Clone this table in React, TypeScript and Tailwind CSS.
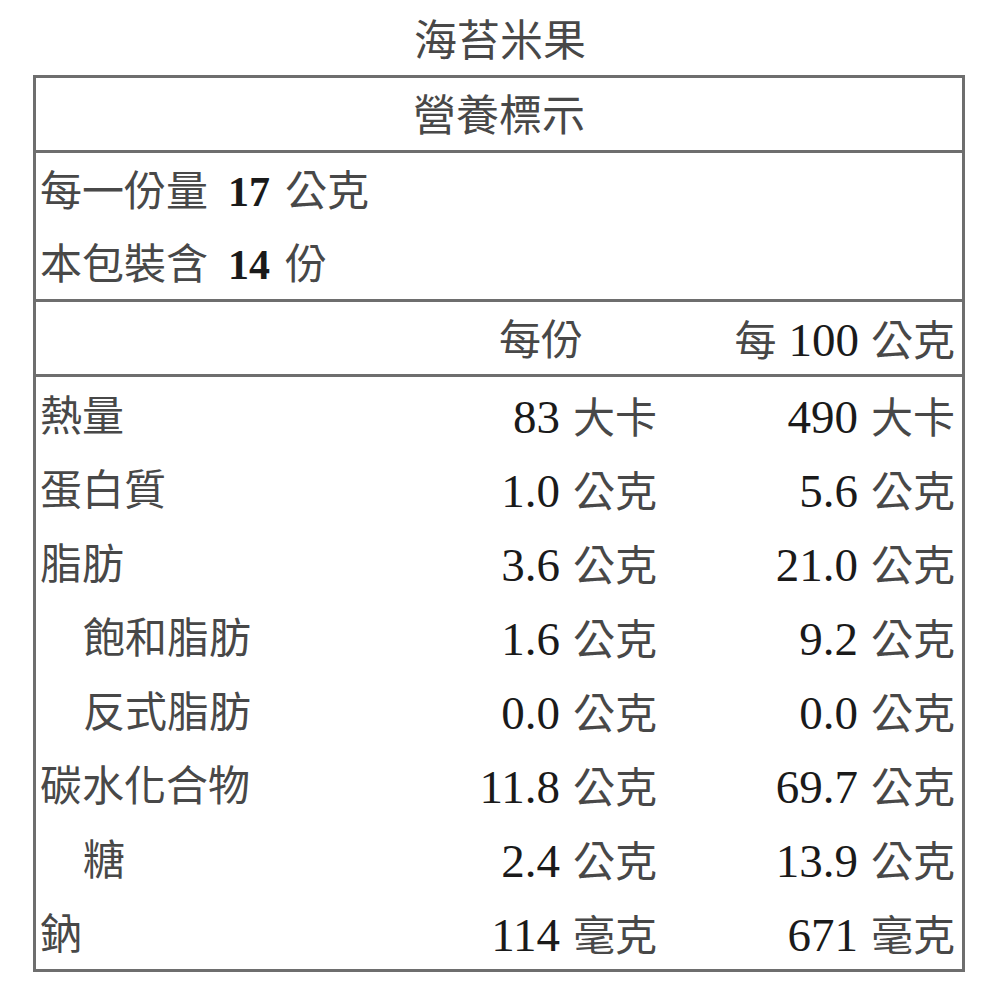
import React from "react";

type Row = {
  name: string;
  indent?: boolean;
  perServing: [string, string];
  per100: [string, string];
};

const rows: Row[] = [
  { name: "熱量", perServing: ["83", "大卡"], per100: ["490", "大卡"] },
  { name: "蛋白質", perServing: ["1.0", "公克"], per100: ["5.6", "公克"] },
  { name: "脂肪", perServing: ["3.6", "公克"], per100: ["21.0", "公克"] },
  { name: "飽和脂肪", indent: true, perServing: ["1.6", "公克"], per100: ["9.2", "公克"] },
  { name: "反式脂肪", indent: true, perServing: ["0.0", "公克"], per100: ["0.0", "公克"] },
  { name: "碳水化合物", perServing: ["11.8", "公克"], per100: ["69.7", "公克"] },
  { name: "糖", indent: true, perServing: ["2.4", "公克"], per100: ["13.9", "公克"] },
  { name: "鈉", perServing: ["114", "毫克"], per100: ["671", "毫克"] },
];

const Amount = ({ value }: { value: [string, string] }) => (
  <span className="inline-flex items-baseline justify-end">
    <span className="text-[#1a1a1a] text-[47px] mr-[13px]">{value[0]}</span>
    <span>{value[1]}</span>
  </span>
);

export default function App() {
  return (
    <div
      className="w-[1000px] h-[1000px] bg-white text-[#484848] text-[42px] leading-none"
      style={{ fontFamily: '"Liberation Serif", "Noto Sans CJK TC", serif' }}
    >
      {/* product name */}
      <div className="h-[75px] flex items-center justify-center pt-[8px] text-[43px]">
        海苔米果
      </div>

      <div className="ml-[33px] w-[932px] border-[3px] border-[#6e6e6e]">
        {/* title */}
        <div className="h-[75px] flex items-center justify-center pt-[5px] border-b-[3px] border-[#6e6e6e] text-[43px]">
          營養標示
        </div>

        {/* serving info */}
        <div className="border-b-[3px] border-[#6e6e6e]">
          <div className="h-[73px] flex items-center pl-[4px] pt-[5px]">
            <span>每一份量</span>
            <span className="font-bold text-[#1a1a1a] ml-[20px] mr-[15px]">17</span>
            <span>公克</span>
          </div>
          <div className="h-[73px] flex items-center pl-[4px] pt-[5px]">
            <span>本包裝含</span>
            <span className="font-bold text-[#1a1a1a] ml-[20px] mr-[15px]">14</span>
            <span>份</span>
          </div>
        </div>

        {/* column heads */}
        <div className="h-[75px] flex items-center pt-[5px] border-b-[3px] border-[#6e6e6e]">
          <div className="flex-1" />
          <div className="w-[260px] text-right pr-[74px]">每份</div>
          <div className="w-[305px] flex justify-end items-baseline pr-[7px]">
            <span>每</span>
            <span className="text-[#1a1a1a] text-[47px] mx-[12px]">100</span>
            <span>公克</span>
          </div>
        </div>

        {/* nutrients */}
        {rows.map((row) => (
          <div key={row.name} className="h-[74px] flex items-center pt-[6px]">
            <div className={row.indent ? "flex-1 pl-[47px]" : "flex-1 pl-[4px]"}>
              {row.name}
            </div>
            <div className="w-[260px] flex justify-end">
              <Amount value={row.perServing} />
            </div>
            <div className="w-[305px] flex justify-end pr-[7px]">
              <Amount value={row.per100} />
            </div>
          </div>
        ))}
      </div>
    </div>
  );
}
